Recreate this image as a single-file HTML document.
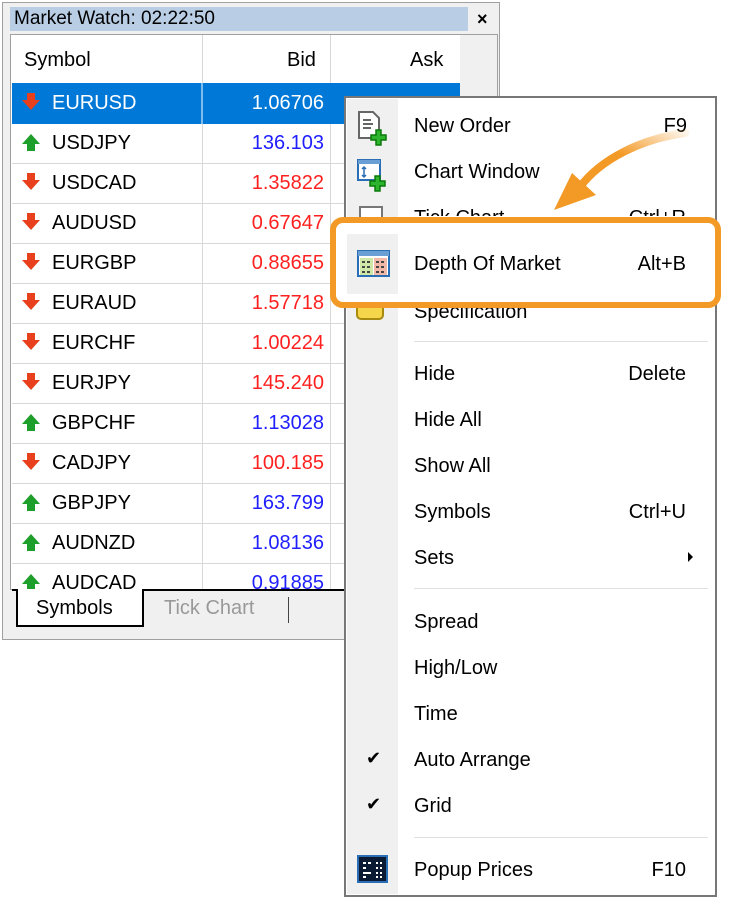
<!DOCTYPE html>
<html><head><style>
body{margin:0;width:736px;height:898px;background:#fff;position:relative;overflow:hidden;font-family:"Liberation Sans",sans-serif;}
.a{position:absolute;}
.t{font-size:20px;color:#000;white-space:nowrap;line-height:24px;}
.row{position:absolute;left:12px;width:448px;height:40px;border-bottom:1px solid #d8d8d8;}
.row .s{position:absolute;left:40px;top:8px;font-size:20px;line-height:24px;}
.row .b{position:absolute;right:136px;top:8px;font-size:20px;line-height:24px;}
.dn{position:absolute;left:10px;top:17px;width:0;height:0;border-left:9px solid transparent;border-right:9px solid transparent;border-top:10px solid #e8401c;}
.dn:before{content:"";position:absolute;left:-4px;top:-17px;width:8px;height:8px;background:#e8401c;}
.up{position:absolute;left:10px;top:11px;width:0;height:0;border-left:9px solid transparent;border-right:9px solid transparent;border-bottom:10px solid #1e9e2a;}
.up:after{content:"";position:absolute;left:-4px;top:10px;width:8px;height:7px;background:#1e9e2a;}
.mi{position:absolute;left:414px;font-size:20px;line-height:24px;color:#000;white-space:nowrap;}
.sc{position:absolute;right:50px;font-size:20px;line-height:24px;color:#000;}
.sep{position:absolute;left:414px;width:294px;height:1px;background:#e0e0e0;}
.chk{position:absolute;left:366px;font-size:18px;}
</style></head><body>
<div class="a" style="left:2px;top:2px;width:498px;height:638px;border:1px solid #a0a0a0;background:#f0f0f0;box-sizing:border-box;"></div>
<div class="a" style="left:10px;top:7px;width:458px;height:24px;background:#b9cde5;"></div>
<div class="a t" style="left:14px;top:7px;font-size:19px;">Market Watch: 02:22:50</div>
<div class="a t" style="left:477px;top:7px;font-weight:bold;font-size:18px;">×</div>
<div class="a" style="left:10px;top:34px;width:488px;height:556px;background:#fff;border:1px solid #a0a0a0;box-sizing:border-box;"></div>
<div class="a" style="left:460px;top:35px;width:37px;height:554px;background:#f0f0f0;"></div>
<div class="a" style="left:202px;top:35px;width:1px;height:554px;background:#d8d8d8;"></div>
<div class="a" style="left:330px;top:35px;width:1px;height:554px;background:#d8d8d8;"></div>
<div class="a t" style="left:24px;top:48px;">Symbol</div>
<div class="a t" style="left:287px;top:48px;">Bid</div>
<div class="a t" style="left:410px;top:48px;">Ask</div>
<div class="a" style="left:12px;top:83px;width:448px;height:41px;background:#0078d7;"></div>
<div class="a" style="left:201px;top:83px;width:2px;height:41px;background:#fff;opacity:.5"></div>

<div class="row" style="top:83px;border-color:transparent"><div class="dn"></div><span class="s" style="color:#fff">EURUSD</span><span class="b" style="color:#fff">1.06706</span></div>
<div class="row" style="top:123px"><div class="up"></div><span class="s">USDJPY</span><span class="b" style="color:#2020ff">136.103</span></div>
<div class="row" style="top:163px"><div class="dn"></div><span class="s">USDCAD</span><span class="b" style="color:#ff2020">1.35822</span></div>
<div class="row" style="top:203px"><div class="dn"></div><span class="s">AUDUSD</span><span class="b" style="color:#ff2020">0.67647</span></div>
<div class="row" style="top:243px"><div class="dn"></div><span class="s">EURGBP</span><span class="b" style="color:#ff2020">0.88655</span></div>
<div class="row" style="top:283px"><div class="dn"></div><span class="s">EURAUD</span><span class="b" style="color:#ff2020">1.57718</span></div>
<div class="row" style="top:323px"><div class="dn"></div><span class="s">EURCHF</span><span class="b" style="color:#ff2020">1.00224</span></div>
<div class="row" style="top:363px"><div class="dn"></div><span class="s">EURJPY</span><span class="b" style="color:#ff2020">145.240</span></div>
<div class="row" style="top:403px"><div class="up"></div><span class="s">GBPCHF</span><span class="b" style="color:#2020ff">1.13028</span></div>
<div class="row" style="top:443px"><div class="dn"></div><span class="s">CADJPY</span><span class="b" style="color:#ff2020">100.185</span></div>
<div class="row" style="top:483px"><div class="up"></div><span class="s">GBPJPY</span><span class="b" style="color:#2020ff">163.799</span></div>
<div class="row" style="top:523px"><div class="up"></div><span class="s">AUDNZD</span><span class="b" style="color:#2020ff">1.08136</span></div>
<div class="row" style="top:563px;height:26px;overflow:hidden;border:none"><div class="up"></div><span class="s">AUDCAD</span><span class="b" style="color:#2020ff">0.91885</span></div>
<div class="a" style="left:12px;top:589px;width:333px;height:40px;background:#f0f0f0;border-top:2px solid #000;box-sizing:border-box;"></div>
<div class="a" style="left:16px;top:589px;width:128px;height:38px;background:#fff;border:2px solid #000;border-top:none;box-sizing:border-box;"></div>
<div class="a t" style="left:36px;top:596px;">Symbols</div>
<div class="a t" style="left:164px;top:596px;color:#999;">Tick Chart</div>
<div class="a" style="left:288px;top:597px;width:1px;height:26px;background:#444;"></div>

<div class="a" style="left:344px;top:96px;width:373px;height:801px;background:#fff;border:2px solid #777;box-sizing:border-box;"></div>
<div class="a" style="left:347px;top:99px;width:51px;height:795px;background:#f0f0f0;"></div>

<svg class="a" style="left:356px;top:110px" width="34" height="36"><path d="M3 2h14l6 6v20H3z" fill="#fff" stroke="#666" stroke-width="2"/><path d="M7 10h8M7 14h10M7 18h8" stroke="#666" stroke-width="2"/><path d="M20 20h5v5h5v5h-5v5h-5v-5h-5v-5h5z" fill="#2db52d" stroke="#0a7a0a" stroke-width="1.5"/></svg>
<svg class="a" style="left:356px;top:158px" width="34" height="34"><rect x="2" y="2" width="22" height="20" fill="#fff" stroke="#2a6fb5" stroke-width="2"/><rect x="2" y="2" width="22" height="4" fill="#6a9fd6"/><path d="M8 9v10M6 11l2-2 2 2M6 17l2 2 2-2" stroke="#2a6fb5" stroke-width="1.5" fill="none"/><path d="M19 18h5v5h5v5h-5v5h-5v-5h-5v-5h5z" fill="#2db52d" stroke="#0a7a0a" stroke-width="1.5"/></svg>
<svg class="a" style="left:356px;top:203px" width="34" height="14"><rect x="4" y="4" width="22" height="12" fill="#fff" stroke="#777" stroke-width="2"/></svg>
<div class="mi" style="top:114px">New Order</div><div class="sc" style="top:114px;right:49px">F9</div>
<div class="mi" style="top:160px">Chart Window</div>
<div class="mi" style="top:206px;height:10px;overflow:hidden">Tick Chart</div><div class="sc" style="top:206px;height:10px;overflow:hidden">Ctrl+R</div>
<div class="a" style="left:356px;top:306px;width:28px;height:14px;background:#f5d64a;border:2px solid #a88a10;border-top:none;border-radius:0 0 5px 5px;box-sizing:border-box"></div>
<div class="mi" style="top:300px;height:22px;overflow:hidden;">Specification</div>

<div class="a" style="left:330px;top:217px;width:391px;height:91px;border:6px solid #f39a26;border-radius:13px;box-sizing:border-box;background:#fff;"></div>
<div class="a" style="left:347px;top:234px;width:51px;height:60px;background:#f0f0f0;"></div>
<svg class="a" style="left:357px;top:250px" width="34" height="30"><rect x="1" y="1" width="31" height="25" fill="#fff" stroke="#2a6fb5" stroke-width="2"/><rect x="1" y="1" width="31" height="5" fill="#6a9fd6"/><rect x="3" y="8" width="13" height="17" fill="#cfe8a8"/><rect x="17" y="8" width="13" height="17" fill="#f2b8a8"/><path d="M5 12h3M10 12h3M5 17h3M10 17h3M5 22h3M10 22h3M19 12h3M24 12h3M19 17h3M24 17h3M19 22h3M24 22h3" stroke="#444" stroke-width="2"/></svg>
<div class="mi" style="top:252px">Depth Of Market</div><div class="sc" style="top:252px">Alt+B</div>

<svg class="a" style="left:540px;top:125px" width="150" height="95"><defs><linearGradient id="g" x1="1" y1="0" x2="0" y2="1"><stop offset="0" stop-color="#f39a26" stop-opacity="0.1"/><stop offset="0.5" stop-color="#f39a26"/></linearGradient></defs><path d="M145 8 C100 14 60 35 40 62" stroke="url(#g)" stroke-width="8" fill="none" stroke-linecap="round"/><path d="M14 85 L32 48 L56 70 Z" fill="#f39a26"/></svg>

<div class="sep" style="top:341px"></div>
<div class="mi" style="top:362px">Hide</div><div class="sc" style="top:362px">Delete</div>
<div class="mi" style="top:408px">Hide All</div>
<div class="mi" style="top:454px">Show All</div>
<div class="mi" style="top:500px">Symbols</div><div class="sc" style="top:500px">Ctrl+U</div>
<div class="mi" style="top:546px">Sets</div>
<div class="a" style="left:688px;top:552px;width:0;height:0;border-top:5px solid transparent;border-bottom:5px solid transparent;border-left:5px solid #000;"></div>
<div class="sep" style="top:588px"></div>
<div class="mi" style="top:610px">Spread</div>
<div class="mi" style="top:656px">High/Low</div>
<div class="mi" style="top:702px">Time</div>
<div class="chk" style="top:748px">✔</div><div class="mi" style="top:748px">Auto Arrange</div>
<div class="chk" style="top:794px">✔</div><div class="mi" style="top:794px">Grid</div>
<div class="sep" style="top:837px"></div>
<svg class="a" style="left:357px;top:855px" width="32" height="30"><rect x="1" y="1" width="29" height="26" fill="#0b1a33" stroke="#2a6fb5" stroke-width="2"/><path d="M6 8h3M11 8h3M6 13h3M6 18h8M6 22h3M19 8h2M23 8h2M19 13h2M23 13h2M19 18h2M23 18h2M19 22h2M23 22h2" stroke="#fff" stroke-width="2"/></svg>
<div class="mi" style="top:858px">Popup Prices</div><div class="sc" style="top:858px">F10</div>
</body></html>
